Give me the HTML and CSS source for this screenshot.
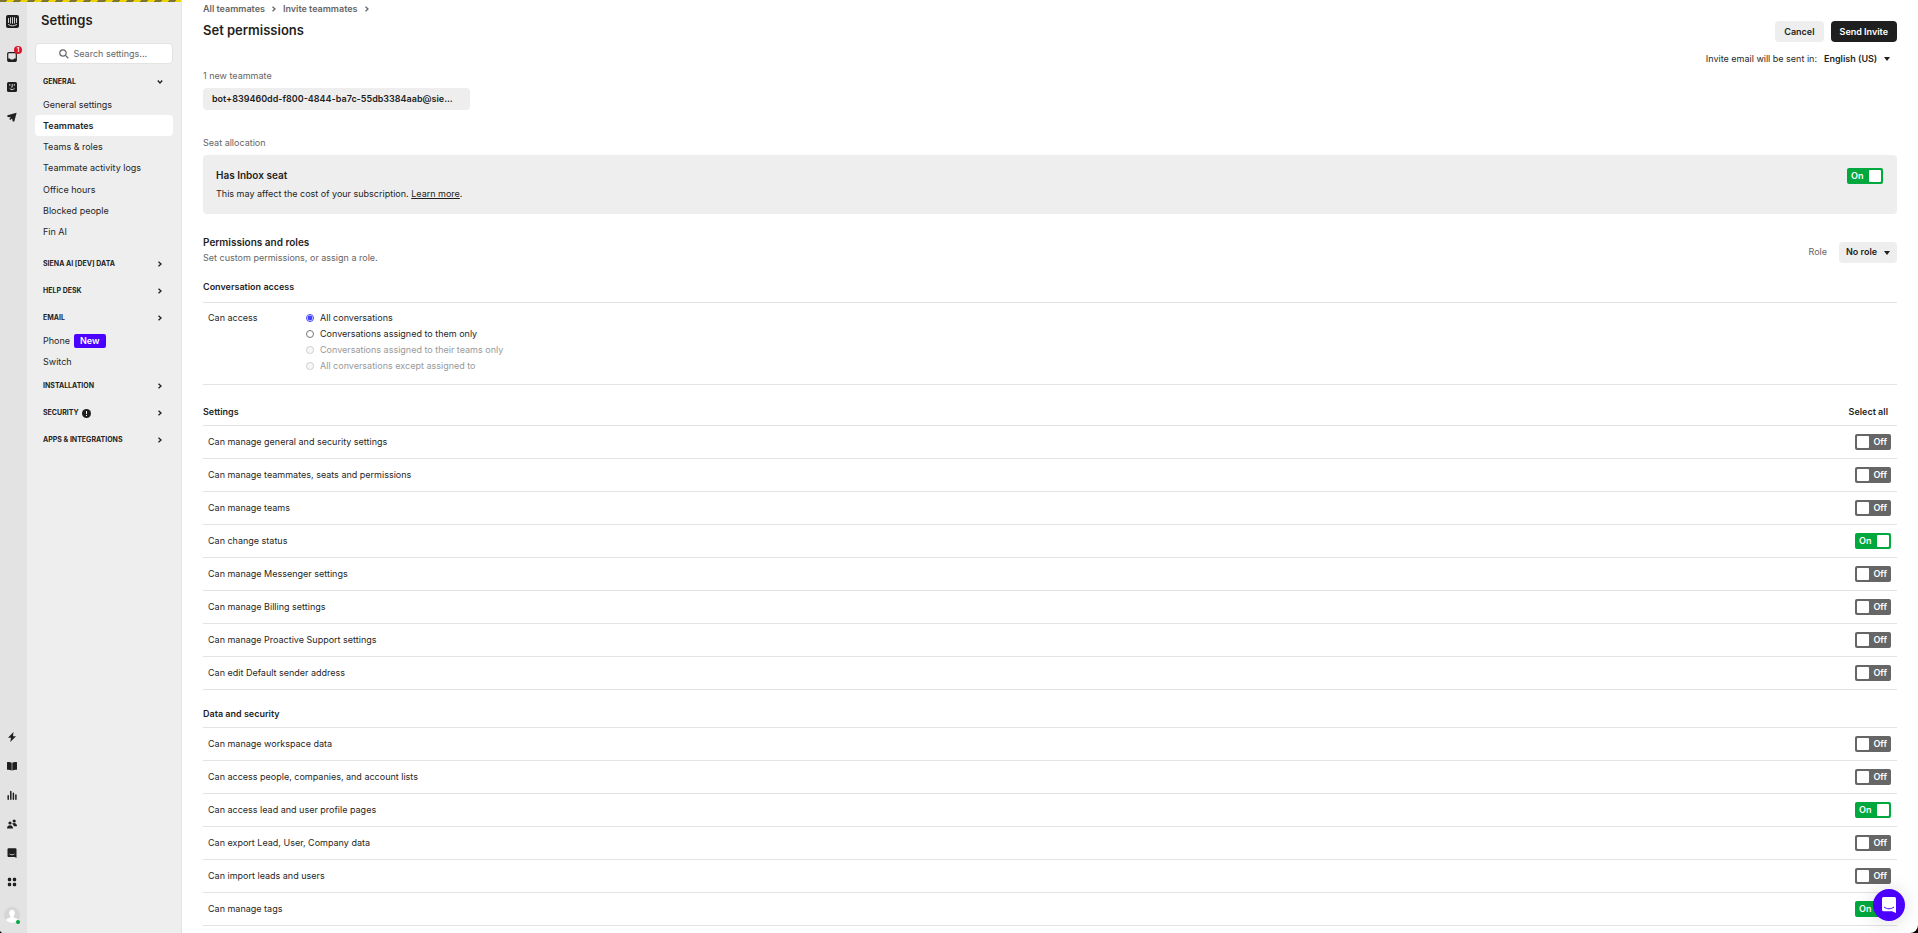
FILE: index.html
```
<!DOCTYPE html>
<html lang="en">
<head>
    <meta charset="UTF-8">
    <meta name="viewport" content="width=device-width, initial-scale=1.0">
    <title>Set permissions</title>
    <link rel="stylesheet" href="styles.css">
</head>
<body>
    <div class="app">
        <div class="env-stripe"></div>
        <nav class="rail" aria-label="Main">
            <div class="rail-group">
                <a href="#" class="logo" aria-label="Home">
                    <svg width="13" height="13" viewBox="0 0 13 13"><rect width="13" height="13" rx="2" fill="#1f1f1f"/><path d="M2.5 3.5v4M4.5 2.7v5.4M6.5 2.5v5.8M8.5 2.7v5.4M10.5 3.5v4M2.5 9.6c2.4 1.7 5.6 1.7 8 0" fill="none" stroke="#e8e8e8" stroke-width=".9" stroke-linecap="round"/></svg>
                </a>
                <a href="#" class="inbox" aria-label="Inbox">
                    <svg width="10" height="10" viewBox="0 0 10 10"><path d="M1.7.7h6.6a1 1 0 0 1 1 1v6.6a1 1 0 0 1-1 1H1.7a1 1 0 0 1-1-1V1.7a1 1 0 0 1 1-1z" fill="none" stroke="#1f1f1f" stroke-width="1.2"/><path d="M1 6.400h1.900c.6 1.600 3.600 1.600 4.200 0H9v2.800H1z" fill="#1f1f1f"/></svg>
                    <span class="badge">1</span>
                </a>
                <a href="#" aria-label="Fin AI">
                    <svg width="10" height="10" viewBox="0 0 10 10"><rect width="10" height="10" rx="1.5" fill="#1f1f1f"/><path d="M2.800 2v1.800M5.200 2v3.200H4.400M7.300 2v1.800M2.600 6.300c1.200 1.700 3.800 1.700 5 0" fill="none" stroke="#e8e8e8" stroke-width=".9"/></svg>
                </a>
                <a href="#" aria-label="Outbound">
                    <svg width="10" height="10" viewBox="0 0 10 10"><path d="M9.600.8.4 3.200v1.700l3.400.4L2.300 7l1 1 1.800-1.400.6 3h1.600z" fill="#1f1f1f"/></svg>
                </a>
            </div>
            <div class="rail-group rail-bottom">
                <a href="#" aria-label="Automation">
                    <svg width="10" height="10" viewBox="0 0 10 10"><path d="M6.500 0 1 5.800h3L3.300 10 9 4.200H6z" fill="#1f1f1f"/></svg>
                </a>
                <a href="#" aria-label="Articles">
                    <svg width="10" height="10" viewBox="0 0 10 10"><path d="M0 1.200C2 .7 3.600 1 4.700 1.700v7.700C3.300 8.700 2 8.500 0 8.700zM10 1.200C8 .7 6.400 1 5.300 1.700v7.700c1.400-.7 2.700-.9 4.700-.7z" fill="#1f1f1f"/></svg>
                </a>
                <a href="#" aria-label="Reports">
                    <svg width="10" height="10" viewBox="0 0 10 10"><path d="M1.200 9.200V5.800M3.800 9.200V1.500M6.400 9.200V3.200M8.900 9.200V5" stroke="#1f1f1f" stroke-width="1.500" stroke-linecap="round"/></svg>
                </a>
                <a href="#" aria-label="Contacts">
                    <svg width="10" height="10" viewBox="0 0 10 10"><circle cx="3" cy="4" r="1.600" fill="#1f1f1f"/><circle cx="7.200" cy="2" r="1.600" fill="#1f1f1f"/><path d="M0 9.500C0 5.200 6 5.200 6 9.500zM5 4.800c1.500-1.500 5-1 5 2.400H6.800C6.500 6 6 5.500 5 4.800z" fill="#1f1f1f"/></svg>
                </a>
                <a href="#" aria-label="Messenger">
                    <svg width="10" height="10" viewBox="0 0 10 10"><path d="M1.500.2h7a1 1 0 0 1 1 1V10L7.800 8.900H1.500a1 1 0 0 1-1-1V1.200a1 1 0 0 1 1-1z" fill="#1f1f1f"/><path d="M2.500 6c1.500 1 3.500 1 5 0" fill="none" stroke="#e8e8e8" stroke-width=".8"/></svg>
                </a>
                <a href="#" aria-label="Apps">
                    <svg width="10" height="10" viewBox="0 0 10 10" fill="#1f1f1f"><rect x=".8" y=".8" width="3.400" height="3.400" rx="1.200"/><rect x="5.800" y=".8" width="3.400" height="3.400" rx="1.200"/><rect x=".8" y="5.800" width="3.400" height="3.400" rx="1.200"/><rect x="5.800" y="5.800" width="3.400" height="3.400" rx="1.200"/></svg>
                </a>
                <a href="#" class="avatar" aria-label="Profile">
                    <svg width="16" height="16" viewBox="0 0 16 16"><circle cx="8" cy="8" r="8" fill="#d6d6d6"/><path d="M8 2.800c1.800 0 2.800 1.300 2.800 3.200 0 1.500-.6 2.600-1.300 3.200v1l3.300 1.500c.8.400 1 1.200 1 1.800a8 8 0 0 1-11.600 0c0-.6.200-1.400 1-1.800l3.300-1.500v-1C5.800 8.600 5.200 7.500 5.200 6c0-1.900 1-3.200 2.800-3.200z" fill="#fff"/></svg>
                    <span class="online"></span>
                </a>
            </div>
        </nav>

        <aside class="sidebar">
            <h2>Settings</h2>
            <div class="search">
                <svg width="10" height="10" viewBox="0 0 10 10"><circle cx="4" cy="4" r="3.200" fill="none" stroke="#666" stroke-width="1.200"/><path d="M6.400 6.400 9.300 9.300" stroke="#666" stroke-width="1.300"/></svg>
                <input type="text" placeholder="Search settings..." aria-label="Search settings">
            </div>

            <div class="nav-group">
                <button class="nav-heading">GENERAL<svg class="chevron down" viewBox="0 0 6 6"><path d="M1.500.8 4 3 1.500 5.200"/></svg></button>
                <ul class="nav-list general">
                    <li><a href="#">General settings</a></li>
                    <li><a href="#" class="active">Teammates</a></li>
                    <li><a href="#">Teams &amp; roles</a></li>
                    <li><a href="#">Teammate activity logs</a></li>
                    <li><a href="#">Office hours</a></li>
                    <li><a href="#">Blocked people</a></li>
                    <li><a href="#">Fin AI</a></li>
                </ul>
            </div>
            <div class="nav-group">
                <button class="nav-heading">SIENA AI [DEV] DATA<svg class="chevron" viewBox="0 0 6 6"><path d="M1.500.8 4 3 1.500 5.200"/></svg></button>
            </div>
            <div class="nav-group">
                <button class="nav-heading">HELP DESK<svg class="chevron" viewBox="0 0 6 6"><path d="M1.500.8 4 3 1.500 5.200"/></svg></button>
            </div>
            <div class="nav-group">
                <button class="nav-heading">EMAIL<svg class="chevron" viewBox="0 0 6 6"><path d="M1.500.8 4 3 1.500 5.200"/></svg></button>
                <ul class="nav-list">
                    <li><a href="#">Phone <span class="tag">New</span></a></li>
                    <li><a href="#">Switch</a></li>
                </ul>
            </div>
            <div class="nav-group">
                <button class="nav-heading">INSTALLATION<svg class="chevron" viewBox="0 0 6 6"><path d="M1.500.8 4 3 1.500 5.200"/></svg></button>
            </div>
            <div class="nav-group">
                <button class="nav-heading">SECURITY<svg class="alert" viewBox="0 0 9 9"><circle cx="4.500" cy="4.500" r="4.500" fill="#1f1f1f"/><path d="M4.500 2v3M4.500 6v1" stroke="#fff" stroke-width="1"/></svg><svg class="chevron" viewBox="0 0 6 6"><path d="M1.500.8 4 3 1.500 5.200"/></svg></button>
            </div>
            <div class="nav-group">
                <button class="nav-heading">APPS &amp; INTEGRATIONS<svg class="chevron" viewBox="0 0 6 6"><path d="M1.500.8 4 3 1.500 5.200"/></svg></button>
            </div>
        </aside>

        <main class="content">
            <div class="breadcrumbs">
                <a href="#">All teammates</a><svg class="chevron" viewBox="0 0 6 6"><path d="M1.500.8 4 3 1.500 5.200"/></svg>
                <a href="#">Invite teammates</a><svg class="chevron" viewBox="0 0 6 6"><path d="M1.500.8 4 3 1.500 5.200"/></svg>
            </div>
            <header class="page-header">
                <h1>Set permissions</h1>
                <div class="actions">
                    <button class="btn">Cancel</button>
                    <button class="btn primary">Send Invite</button>
                </div>
            </header>
            <div class="language">
                <label for="language">Invite email will be sent in:</label>
                <div class="select plain">
                    <select id="language"><option>English (US)</option></select>
                    <svg class="caret" viewBox="0 0 6 4"><path d="M0 0h6L3 4z"/></svg>
                </div>
            </div>

            <p class="caption">1 new teammate</p>
            <div class="email-pill">bot+839460dd-f800-4844-ba7c-55db3384aab@sie...</div>

            <p class="caption">Seat allocation</p>
            <section class="seat-card">
                <div>
                    <h3><label for="seat">Has Inbox seat</label></h3>
                    <p>This may affect the cost of your subscription. <a href="#">Learn more</a>.</p>
                </div>
                <label class="toggle"><input type="checkbox" id="seat" checked><span>On</span></label>
            </section>

            <section class="roles">
                <div>
                    <h3>Permissions and roles</h3>
                    <p>Set custom permissions, or assign a role.</p>
                </div>
                <div class="role-picker">
                    <label for="role">Role</label>
                    <div class="select">
                        <select id="role"><option>No role</option></select>
                        <svg class="caret" viewBox="0 0 6 4"><path d="M0 0h6L3 4z"/></svg>
                    </div>
                </div>
            </section>

            <h4 class="access-title">Conversation access</h4>
            <fieldset class="access" aria-labelledby="access-label">
                <span id="access-label" class="access-label">Can access</span>
                <div class="radios">
                    <label><input type="radio" name="access" checked>All conversations</label>
                    <label><input type="radio" name="access">Conversations assigned to them only</label>
                    <label class="disabled"><input type="radio" name="access" disabled>Conversations assigned to their teams only</label>
                    <label class="disabled"><input type="radio" name="access" disabled>All conversations except assigned to</label>
                </div>
            </fieldset>

            <div class="group-header first">
                <h4>Settings</h4>
                <button class="select-all">Select all</button>
            </div>
            <ul class="permissions">
                <li><label for="p1">Can manage general and security settings</label><label class="toggle"><input type="checkbox" id="p1"><span>Off</span></label></li>
                <li><label for="p2">Can manage teammates, seats and permissions</label><label class="toggle"><input type="checkbox" id="p2"><span>Off</span></label></li>
                <li><label for="p3">Can manage teams</label><label class="toggle"><input type="checkbox" id="p3"><span>Off</span></label></li>
                <li><label for="p4">Can change status</label><label class="toggle"><input type="checkbox" id="p4" checked><span>On</span></label></li>
                <li><label for="p5">Can manage Messenger settings</label><label class="toggle"><input type="checkbox" id="p5"><span>Off</span></label></li>
                <li><label for="p6">Can manage Billing settings</label><label class="toggle"><input type="checkbox" id="p6"><span>Off</span></label></li>
                <li><label for="p7">Can manage Proactive Support settings</label><label class="toggle"><input type="checkbox" id="p7"><span>Off</span></label></li>
                <li><label for="p8">Can edit Default sender address</label><label class="toggle"><input type="checkbox" id="p8"><span>Off</span></label></li>
            </ul>

            <div class="group-header">
                <h4>Data and security</h4>
            </div>
            <ul class="permissions">
                <li><label for="p9">Can manage workspace data</label><label class="toggle"><input type="checkbox" id="p9"><span>Off</span></label></li>
                <li><label for="p10">Can access people, companies, and account lists</label><label class="toggle"><input type="checkbox" id="p10"><span>Off</span></label></li>
                <li><label for="p11">Can access lead and user profile pages</label><label class="toggle"><input type="checkbox" id="p11" checked><span>On</span></label></li>
                <li><label for="p12">Can export Lead, User, Company data</label><label class="toggle"><input type="checkbox" id="p12"><span>Off</span></label></li>
                <li><label for="p13">Can import leads and users</label><label class="toggle"><input type="checkbox" id="p13"><span>Off</span></label></li>
                <li><label for="p14">Can manage tags</label><label class="toggle"><input type="checkbox" id="p14" checked><span>On</span></label></li>
            </ul>
        </main>

        <button class="launcher" aria-label="Open messenger">
            <svg width="14" height="16" viewBox="0 0 14 16"><path d="M1.500 0h11A1.500 1.500 0 0 1 14 1.500V16l-4-1.800H1.500A1.500 1.500 0 0 1 0 12.700V1.500A1.500 1.500 0 0 1 1.500 0z" fill="#fff"/><path d="M2.300 10.200c2.800 2.200 6.600 2.200 9.400 0" fill="none" stroke="#4b00ff" stroke-width="1" stroke-linecap="round"/></svg>
        </button>
    </div>

    <script>
        document.querySelectorAll('.toggle input').forEach((input) => {
            input.addEventListener('change', () => {
                input.nextElementSibling.textContent = input.checked ? 'On' : 'Off';
            });
        });
    </script>
</body>
</html>
```
FILE: styles.css
```
* {
    box-sizing: border-box;
}

html {
    background: #000;
}

body {
    margin: 0;
    font-family: Inter, sans-serif;
    font-size: 9px;
    line-height: 14px;
    color: #1f1f1f;
}

h1, h2, h3, h4, p, ul {
    margin: 0;
    padding: 0;
    font-weight: 400;
}

ul {
    list-style: none;
}

a {
    color: inherit;
    text-decoration: none;
}

button, input, select {
    font: inherit;
    color: inherit;
}

button {
    border: none;
    padding: 0;
    background: none;
    cursor: pointer;
}

.app {
    position: relative;
    display: flex;
    height: 100vh;
    overflow: hidden;
    background: #fff;
    border-radius: 0 0 8px 4px;
}

.env-stripe {
    position: absolute;
    top: 0;
    left: 0;
    width: 181px;
    height: 2px;
    background: repeating-linear-gradient(135deg, #7d7430 0 5px, #ebd400 5px 10px);
}

/* icon rail */
.rail {
    flex: none;
    display: flex;
    flex-direction: column;
    justify-content: space-between;
    width: 27px;
    padding: 15px 0 10px;
    background: #e3e3e3;
}

.rail-group {
    display: flex;
    flex-direction: column;
    align-items: center;
    gap: 20px;
    padding-right: 3px;
}

.rail-group a {
    position: relative;
    display: flex;
}

.logo {
    margin-bottom: 4px;
}

.rail-bottom {
    gap: 19px;
}

.rail-bottom .avatar {
    margin-top: 1px;
}

.badge {
    position: absolute;
    top: -6px;
    right: -5px;
    width: 8px;
    height: 8px;
    border-radius: 50%;
    background: #d9142b;
    color: #fff;
    font-size: 6px;
    font-weight: 700;
    line-height: 8px;
    text-align: center;
}

.online {
    position: absolute;
    right: 0;
    bottom: -1px;
    width: 4px;
    height: 4px;
    border-radius: 50%;
    background: #00a83e;
}

/* settings sidebar */
.sidebar {
    flex: none;
    width: 155px;
    padding: 12px 8px 0;
    background: #eee;
    border-right: 1px solid #e3e3e3;
}

.sidebar h2 {
    padding-left: 6px;
    font-size: 13px;
    font-weight: 600;
    line-height: 16px;
}

.search {
    display: flex;
    align-items: center;
    justify-content: center;
    gap: 5px;
    height: 21px;
    margin: 15px 0 5px;
    background: #fff;
    border: 1px solid #e3e3e3;
    border-radius: 4px;
}

.search input {
    width: 76px;
    padding: 0;
    border: none;
    outline: none;
    background: none;
}

.search input::placeholder {
    color: #666;
}

.nav-group {
    margin-bottom: 1px;
}

.nav-heading {
    display: flex;
    align-items: center;
    width: 100%;
    height: 26px;
    padding: 0 10px 0 8px;
    font-size: 7px;
    font-weight: 700;
}

.chevron {
    width: 6px;
    height: 6px;
    fill: none;
    stroke: #1f1f1f;
    stroke-width: 1.3;
}

.nav-heading .chevron {
    margin-left: auto;
}

.down {
    transform: rotate(90deg);
}

.alert {
    width: 9px;
    height: 9px;
    margin-left: 3px;
}

.nav-list {
    margin: -1px 0 1px;
}

.general {
    display: flex;
    flex-direction: column;
    justify-content: space-between;
    height: 149px;
    margin-bottom: 8px;
}

.nav-list a {
    display: flex;
    align-items: center;
    height: 21px;
    padding-left: 8px;
    border-radius: 4px;
}

.nav-list .active {
    background: #fff;
    font-weight: 600;
}

.tag {
    margin-left: 4px;
    padding: 0 6px;
    border-radius: 2px;
    background: #4b00ff;
    color: #fff;
    font-weight: 600;
}

/* main column */
.content {
    flex: 1;
    min-width: 0;
    padding: 2px 21px 0;
    overflow: hidden;
}

.breadcrumbs {
    display: flex;
    align-items: center;
    gap: 6px;
    color: #666;
    font-weight: 600;
}

.breadcrumbs .chevron {
    stroke: #666;
}

.page-header {
    display: flex;
    justify-content: space-between;
    align-items: flex-start;
    padding-top: 5px;
}

.page-header h1 {
    padding-top: 1px;
    font-size: 13px;
    font-weight: 600;
    line-height: 16px;
}

.actions {
    display: flex;
    gap: 7px;
}

.btn {
    height: 21px;
    padding: 0 9px;
    border-radius: 4px;
    background: #eee;
    font-weight: 600;
}

.primary {
    background: #1f1f1f;
    color: #fff;
}

.language {
    display: flex;
    justify-content: flex-end;
    align-items: center;
    height: 21px;
    margin-top: 6px;
}

.select {
    position: relative;
    background: #eee;
    border-radius: 4px;
}

.select select {
    display: block;
    height: 21px;
    padding: 0 19px 0 7px;
    border: none;
    background: none;
    appearance: none;
    font-weight: 600;
}

.plain {
    background: none;
}

.caret {
    position: absolute;
    top: 9px;
    right: 7px;
    width: 6px;
    height: 4px;
    fill: #1f1f1f;
    pointer-events: none;
}

.caption {
    color: #666;
}

.email-pill {
    width: 267px;
    height: 22px;
    margin: 5px 0 26px;
    padding: 0 9px;
    border-radius: 4px;
    background: #eee;
    font-weight: 600;
    line-height: 22px;
}

.seat-card {
    display: flex;
    justify-content: space-between;
    align-items: flex-start;
    margin-top: 5px;
    padding: 13px 14px 13px 13px;
    border-radius: 4px;
    background: #eee;
}

.seat-card h3, .roles h3 {
    font-size: 10px;
    font-weight: 600;
}

.seat-card p {
    margin-top: 5px;
}

.seat-card a {
    text-decoration: underline;
}

.toggle {
    display: flex;
    align-items: center;
    justify-content: space-between;
    width: 36px;
    height: 16px;
    padding: 2px;
    border-radius: 2px;
    background: #666;
    color: #fff;
    font-weight: 600;
    line-height: 12px;
}

.toggle:has(:checked) {
    flex-direction: row-reverse;
    background: #00a83e;
}

.toggle input {
    width: 12px;
    height: 12px;
    margin: 0;
    border-radius: 1px;
    background: #fff;
    appearance: none;
}

.toggle span {
    margin: 0 2px;
    padding-bottom: 1px;
}

.roles {
    display: flex;
    justify-content: space-between;
    align-items: center;
    margin-top: 21px;
}

.roles p {
    margin-top: 2px;
    color: #666;
}

.role-picker {
    display: flex;
    align-items: center;
    gap: 12px;
    padding-top: 4px;
    color: #666;
}

.role-picker select {
    color: #1f1f1f;
}

h4 {
    font-weight: 600;
}

.access-title {
    margin: 15px 0 8px;
}

.access {
    display: flex;
    margin: 0;
    padding: 8px 5px 11px;
    border: solid #e3e3e3;
    border-width: 1px 0;
}

.access-label {
    width: 98px;
}

.radios {
    display: flex;
    flex-direction: column;
    gap: 2px;
}

.radios label {
    display: flex;
    align-items: center;
    gap: 6px;
}

.radios input {
    width: 8px;
    height: 8px;
    margin: 0;
    accent-color: #4040ff;
}

.radios .disabled {
    color: #999;
}

.group-header {
    display: flex;
    justify-content: space-between;
    padding: 17px 9px 6px 0;
}

.group-header.first {
    padding-top: 20px;
}

.select-all {
    font-weight: 600;
}

.permissions {
    border-top: 1px solid #e3e3e3;
}

.permissions li {
    display: flex;
    justify-content: space-between;
    align-items: center;
    height: 33px;
    padding: 0 6px 0 5px;
    border-bottom: 1px solid #e3e3e3;
}

.launcher {
    position: absolute;
    right: 13px;
    bottom: 12px;
    display: flex;
    align-items: center;
    justify-content: center;
    width: 32px;
    height: 32px;
    border-radius: 50%;
    background: #4b00ff;
    box-shadow: 0 1px 20px rgba(0, 0, 0, 0.15);
}
```
